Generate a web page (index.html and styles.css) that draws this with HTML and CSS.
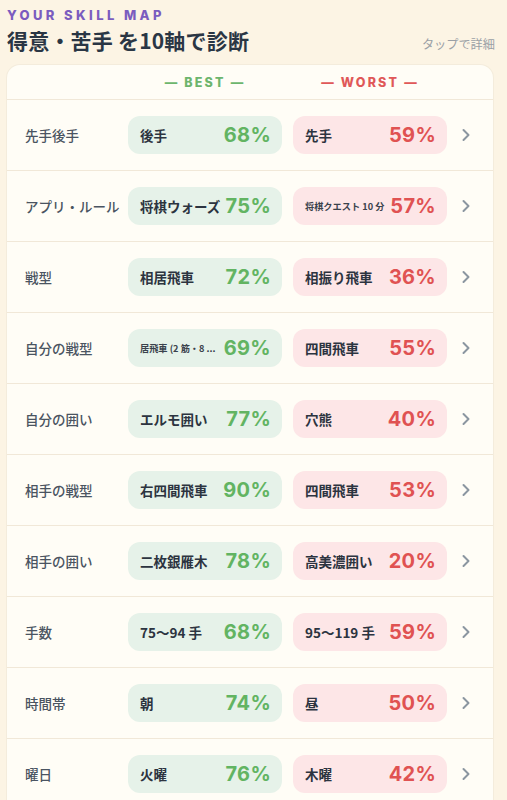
FILE: index.html
```html
<!DOCTYPE html>
<html lang="ja">
<head>
<meta charset="utf-8">
<link rel="stylesheet" href="styles.css">
</head>
<body>
<div class="top">
  <div class="eyebrow">YOUR SKILL MAP</div>
  <div class="titlebar">
    <h1 class="title">得意・苦手 を10軸で診断</h1>
    <span class="hint">タップで詳細</span>
  </div>
</div>
<div class="card">
  <div class="head">
    <span></span>
    <span class="h-best">— BEST —</span>
    <span class="h-worst">— WORST —</span>
    <span></span>
  </div>
  <div class="row">
    <span class="label">先手後手</span>
    <div class="pill best"><span class="name">後手</span><span class="pct">68%</span></div>
    <div class="pill worst"><span class="name">先手</span><span class="pct">59%</span></div>
    <svg class="chev" viewBox="0 0 10 14" width="10" height="14"><path d="M2.5 2 L7.5 7 L2.5 12" /></svg>
  </div>
  <div class="row">
    <span class="label">アプリ・ルール</span>
    <div class="pill best"><span class="name">将棋ウォーズ</span><span class="pct">75%</span></div>
    <div class="pill worst"><span class="name small">将棋クエスト 10 分</span><span class="pct">57%</span></div>
    <svg class="chev" viewBox="0 0 10 14" width="10" height="14"><path d="M2.5 2 L7.5 7 L2.5 12" /></svg>
  </div>
  <div class="row">
    <span class="label">戦型</span>
    <div class="pill best"><span class="name">相居飛車</span><span class="pct">72%</span></div>
    <div class="pill worst"><span class="name">相振り飛車</span><span class="pct">36%</span></div>
    <svg class="chev" viewBox="0 0 10 14" width="10" height="14"><path d="M2.5 2 L7.5 7 L2.5 12" /></svg>
  </div>
  <div class="row">
    <span class="label">自分の戦型</span>
    <div class="pill best"><span class="name small">居飛車 (2 筋・8 ...</span><span class="pct">69%</span></div>
    <div class="pill worst"><span class="name">四間飛車</span><span class="pct">55%</span></div>
    <svg class="chev" viewBox="0 0 10 14" width="10" height="14"><path d="M2.5 2 L7.5 7 L2.5 12" /></svg>
  </div>
  <div class="row">
    <span class="label">自分の囲い</span>
    <div class="pill best"><span class="name">エルモ囲い</span><span class="pct">77%</span></div>
    <div class="pill worst"><span class="name">穴熊</span><span class="pct">40%</span></div>
    <svg class="chev" viewBox="0 0 10 14" width="10" height="14"><path d="M2.5 2 L7.5 7 L2.5 12" /></svg>
  </div>
  <div class="row">
    <span class="label">相手の戦型</span>
    <div class="pill best"><span class="name">右四間飛車</span><span class="pct">90%</span></div>
    <div class="pill worst"><span class="name">四間飛車</span><span class="pct">53%</span></div>
    <svg class="chev" viewBox="0 0 10 14" width="10" height="14"><path d="M2.5 2 L7.5 7 L2.5 12" /></svg>
  </div>
  <div class="row">
    <span class="label">相手の囲い</span>
    <div class="pill best"><span class="name">二枚銀雁木</span><span class="pct">78%</span></div>
    <div class="pill worst"><span class="name">高美濃囲い</span><span class="pct">20%</span></div>
    <svg class="chev" viewBox="0 0 10 14" width="10" height="14"><path d="M2.5 2 L7.5 7 L2.5 12" /></svg>
  </div>
  <div class="row">
    <span class="label">手数</span>
    <div class="pill best"><span class="name">75〜94 手</span><span class="pct">68%</span></div>
    <div class="pill worst"><span class="name">95〜119 手</span><span class="pct">59%</span></div>
    <svg class="chev" viewBox="0 0 10 14" width="10" height="14"><path d="M2.5 2 L7.5 7 L2.5 12" /></svg>
  </div>
  <div class="row">
    <span class="label">時間帯</span>
    <div class="pill best"><span class="name">朝</span><span class="pct">74%</span></div>
    <div class="pill worst"><span class="name">昼</span><span class="pct">50%</span></div>
    <svg class="chev" viewBox="0 0 10 14" width="10" height="14"><path d="M2.5 2 L7.5 7 L2.5 12" /></svg>
  </div>
  <div class="row">
    <span class="label">曜日</span>
    <div class="pill best"><span class="name">火曜</span><span class="pct">76%</span></div>
    <div class="pill worst"><span class="name">木曜</span><span class="pct">42%</span></div>
    <svg class="chev" viewBox="0 0 10 14" width="10" height="14"><path d="M2.5 2 L7.5 7 L2.5 12" /></svg>
  </div>
</div>
</body>
</html>
```
FILE: styles.css
```css
* { box-sizing: border-box; }
html, body { margin: 0; padding: 0; }
body {
  background: #fcf4e4;
  font-family: "Noto Sans CJK JP", "Noto Sans", sans-serif;
  color: #2c3642;
  width: 507px;
  overflow: hidden;
}
.top {
  padding: 7px 12px 0 7px;
}
.eyebrow {
  font-family: "Inter", "Noto Sans CJK JP", sans-serif;
  font-weight: 800;
  font-size: 13px;
  line-height: 16px;
  letter-spacing: 3.4px;
  color: #7b5cbf;
}
.titlebar {
  display: flex;
  justify-content: space-between;
  align-items: flex-end;
  height: 32px;
}
.title {
  margin: 0;
  font-size: 21px;
  line-height: 30px;
  font-weight: 700;
  color: #2a3644;
  letter-spacing: 0.2px;
}
.hint {
  font-size: 12.2px;
  line-height: 20px;
  color: #9aa0a6;
  margin-bottom: 1px;
}
.card {
  margin: 9px 0 0 6px;
  width: 488px;
  background: #fffdf6;
  border: 1px solid #f4ecdc;
  border-bottom: none;
  border-radius: 14px 14px 0 0;
}
.head, .row {
  display: grid;
  grid-template-columns: 92px 154px 154px 1fr;
  column-gap: 11px;
  align-items: center;
  padding-left: 18px;
}
.head {
  height: 35px;
  font-family: "Inter", sans-serif;
  font-weight: 800;
  font-size: 12.5px;
  letter-spacing: 2.2px;
  border-bottom: 1px solid #f1e8d8;
}
.h-best { color: #6db56d; text-align: center; }
.h-worst { color: #e05858; text-align: center; }
.row {
  height: 71px;
  border-bottom: 1px solid #f1e8d8;
}
.label {
  font-size: 13.5px;
  font-weight: 500;
  color: #4a5461;
  white-space: nowrap;
}
.pill {
  height: 38px;
  border-radius: 12px;
  display: flex;
  align-items: center;
  justify-content: space-between;
  padding: 0 11px 0 12px;
}
.best { background: #e6f2e9; }
.worst { background: #fde6e7; }
.name {
  font-size: 13.5px;
  font-weight: 700;
  color: #2c3440;
  white-space: nowrap;
}
.name.small {
  font-size: 9.2px;
  font-weight: 700;
  color: #3a424c;
}
.pct {
  font-family: "Inter", sans-serif;
  font-weight: 700;
  font-size: 20px;
  letter-spacing: 0.3px;
}
.best .pct { color: #62b462; }
.worst .pct { color: #e05252; }
.chev {
  justify-self: start;
  margin-left: 3px;
  fill: none;
  stroke: #8b96a0;
  stroke-width: 2;
  stroke-linecap: round;
  stroke-linejoin: round;
}
```
